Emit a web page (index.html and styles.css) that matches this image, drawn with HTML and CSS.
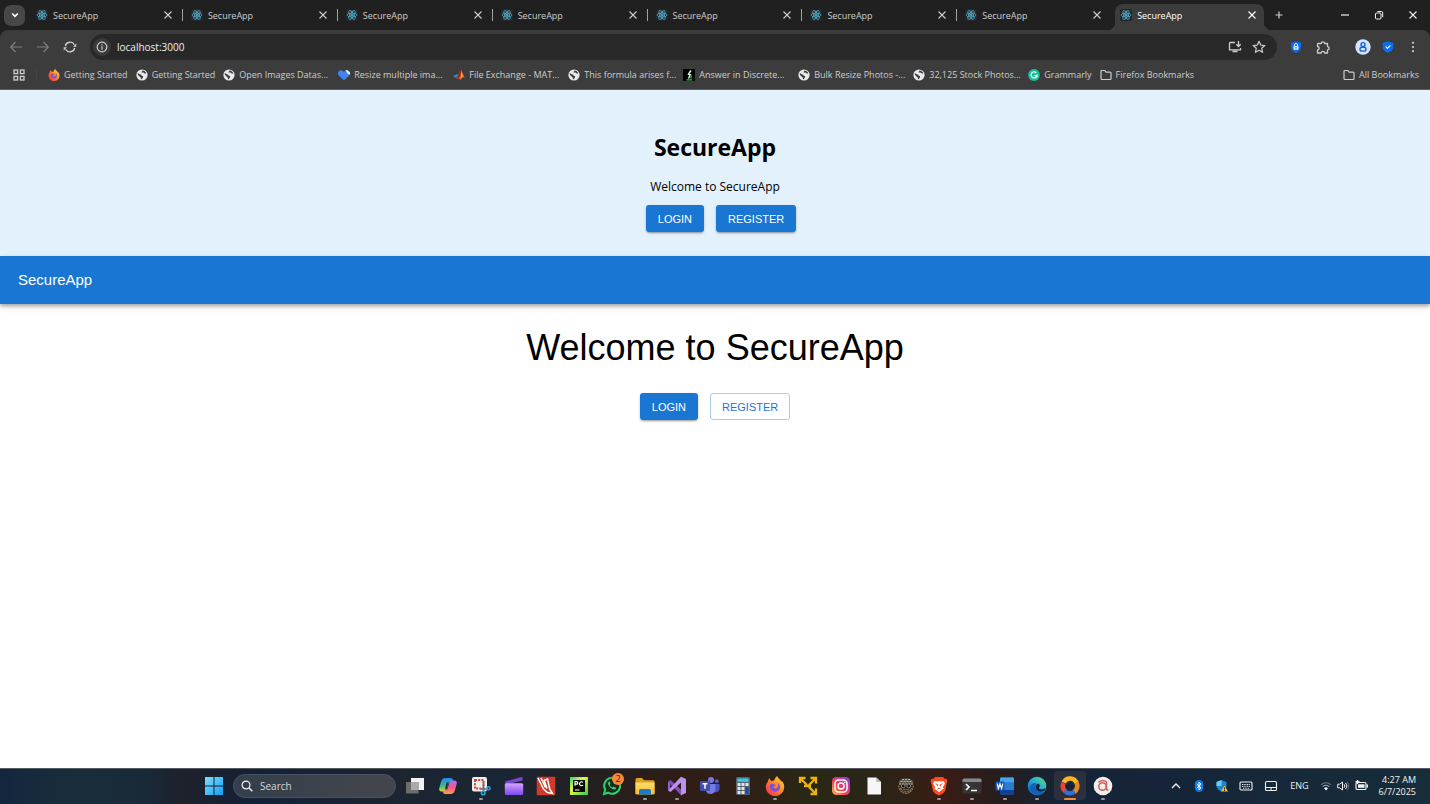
FILE: index.html
```html
<!DOCTYPE html>
<html lang="en">
<head>
<meta charset="utf-8">
<meta name="viewport" content="width=device-width, initial-scale=1">
<title>SecureApp</title>
<link rel="stylesheet" href="styles.css">
</head>
<body>
<svg class="sprite" aria-hidden="true">
  <defs>
    <linearGradient id="g-win" x1="0" y1="0" x2="1" y2="1"><stop offset="0" stop-color="#7fdcff"/><stop offset="1" stop-color="#12a0f2"/></linearGradient>
    <linearGradient id="g-fox" x1="1" y1="0" x2="0" y2="1"><stop offset="0" stop-color="#ffe14a"/><stop offset=".45" stop-color="#ff8a22"/><stop offset="1" stop-color="#f5205a"/></linearGradient>
    <linearGradient id="g-clip" x1="0" y1="0" x2="0" y2="1"><stop offset="0" stop-color="#d9a6ff"/><stop offset=".5" stop-color="#a873f7"/><stop offset="1" stop-color="#7a4cf0"/></linearGradient>
    <linearGradient id="g-cop1" x1="0" y1="0" x2="0" y2="1"><stop offset="0" stop-color="#1d8df0"/><stop offset=".6" stop-color="#37bf8b"/><stop offset="1" stop-color="#f1cf2b"/></linearGradient>
    <linearGradient id="g-cop2" x1="0" y1="0" x2="0" y2="1"><stop offset="0" stop-color="#b06cf5"/><stop offset=".5" stop-color="#f0568c"/><stop offset="1" stop-color="#ffa04c"/></linearGradient>
    <linearGradient id="g-insta" x1="0" y1="1" x2="1" y2="0"><stop offset="0" stop-color="#ffc34a"/><stop offset=".4" stop-color="#f4404f"/><stop offset=".7" stop-color="#c835a5"/><stop offset="1" stop-color="#6a4be0"/></linearGradient>
    <linearGradient id="g-edge" x1="0" y1="1" x2="1" y2="0"><stop offset="0" stop-color="#0b58b4"/><stop offset=".5" stop-color="#23a7dc"/><stop offset="1" stop-color="#62e06b"/></linearGradient>
    <linearGradient id="g-folder" x1="0" y1="0" x2="0" y2="1"><stop offset="0" stop-color="#ffdf70"/><stop offset="1" stop-color="#f9bb2c"/></linearGradient>
    <linearGradient id="g-pc" x1="0" y1="0" x2="1" y2="1"><stop offset="0" stop-color="#24d789"/><stop offset=".4" stop-color="#e8f73c"/><stop offset="1" stop-color="#35c45a"/></linearGradient>
  </defs>
  <symbol id="react" viewBox="0 0 24 24"><rect width="24" height="24" rx="3" fill="#23272c"/><g fill="none" stroke="#4fa9c2" stroke-width="1.7"><ellipse cx="12" cy="12" rx="10" ry="4"/><ellipse cx="12" cy="12" rx="10" ry="4" transform="rotate(60 12 12)"/><ellipse cx="12" cy="12" rx="10" ry="4" transform="rotate(120 12 12)"/></g><circle cx="12" cy="12" r="2.2" fill="#58bcd6"/></symbol>
  <symbol id="close" viewBox="0 0 10 10"><path d="M1.500 1.500l7 7M8.500 1.500l-7 7" fill="none" stroke="currentColor" stroke-width="1.1"/></symbol>
  <symbol id="chevron-down" viewBox="0 0 10 10"><path d="M2.200 3.500L5 6.300l2.800-2.800" fill="none" stroke="currentColor" stroke-width="1.6"/></symbol>
  <symbol id="plus" viewBox="0 0 10 10"><path d="M5 1.500v7M1.500 5h7" stroke="currentColor" stroke-width="1.2"/></symbol>
  <symbol id="minus" viewBox="0 0 10 10"><path d="M1 5h8" stroke="currentColor" stroke-width="1.200"/></symbol>
  <symbol id="restore" viewBox="0 0 10 10"><rect x="1.500" y="3" width="5.500" height="6" rx="1" fill="none" stroke="currentColor"/><path d="M3.500 1.500h4a1.200 1.200 0 0 1 1.200 1.200v4.500" fill="none" stroke="currentColor"/></symbol>
  <symbol id="back" viewBox="0 0 14 14"><path d="M13 7H2M6.500 2L1.700 7l4.800 5" fill="none" stroke="currentColor" stroke-width="1.200"/></symbol>
  <symbol id="forward" viewBox="0 0 14 14"><path d="M1 7h11M7.500 2l4.800 5-4.800 5" fill="none" stroke="currentColor" stroke-width="1.200"/></symbol>
  <symbol id="reload" viewBox="0 0 14 14"><path d="M2.300 6a4.900 4.900 0 0 1 9.100-1.200M11.700 8a4.900 4.900 0 0 1-9.100 1.200" fill="none" stroke="currentColor" stroke-width="1.300"/><path d="M13.300 3.500v3.300H10zM.7 10.500V7.200H4z" fill="currentColor"/></symbol>
  <symbol id="info" viewBox="0 0 12 12"><circle cx="6" cy="6" r="4.800" fill="none" stroke="currentColor" stroke-width="1.200"/><path d="M6 5.300v3.400M6 3.200v1.200" stroke="currentColor" stroke-width="1.200"/></symbol>
  <symbol id="install" viewBox="0 0 14 14"><path d="M7 2.500H2.200a.7.700 0 0 0-.7.700v6.600h11V8M4.500 11.500h5M10.500 1v5M8.300 4.300l2.200 2.200 2.200-2.200" fill="none" stroke="currentColor" stroke-width="1.300"/></symbol>
  <symbol id="star" viewBox="0 0 14 14"><path d="M7 1.300l1.700 3.800 4.100.4-3.100 2.700.9 4.100L7 10.200l-3.600 2.100.9-4.100-3.100-2.700 4.100-.4z" fill="none" stroke="currentColor" stroke-width="1.200" stroke-linejoin="round"/></symbol>
  <symbol id="shield-lock" viewBox="0 0 12 12"><path d="M6 .3l5 1.500v4.500c0 2.500-2 4.500-5 5.500-3-1-5-3-5-5.500V1.800z" fill="#0b6cf5"/><rect x="3.500" y="5" width="5" height="3.700" rx=".6" fill="#dbeaff"/><path d="M4.500 5V4a1.500 1.500 0 0 1 3 0v1" fill="none" stroke="#dbeaff"/><circle cx="6" cy="6.800" r=".7" fill="#0b6cf5"/></symbol>
  <symbol id="puzzle" viewBox="0 0 14 14"><path d="M2.300 3.500h2.900a1.700 1.700 0 1 1 3.400 0h2.900v3.100a1.600 1.600 0 1 1 0 3.200v3.200H8.600a1.700 1.700 0 0 0-3.400 0H1.500V9.900a1.700 1.700 0 0 0 0-3.400V4.300a.8.800 0 0 1 .8-.8z" fill="none" stroke="currentColor" stroke-width="1.300" stroke-linejoin="round"/></symbol>
  <symbol id="profile" viewBox="0 0 16 16"><circle cx="8" cy="8" r="7.700" fill="#d2e4ff"/><circle cx="8" cy="5.600" r="2" fill="none" stroke="#1763cf" stroke-width="1.400"/><rect x="5" y="8.300" width="6" height="3.800" rx="1.900" fill="none" stroke="#1763cf" stroke-width="1.400"/></symbol>
  <symbol id="shield-check" viewBox="0 0 12 12"><path d="M6 .3l5.300 1.600v4.300c0 2.700-2.200 4.500-5.300 5.500C2.900 10.700.7 8.900.7 6.200V1.900z" fill="#0b6cf5"/><path d="M3.700 5.700l1.700 1.700 3-3" fill="none" stroke="#fff" stroke-width="1.200"/></symbol>
  <symbol id="dots" viewBox="0 0 12 12"><g fill="currentColor"><circle cx="6" cy="1.800" r="1.100"/><circle cx="6" cy="6" r="1.100"/><circle cx="6" cy="10.200" r="1.100"/></g></symbol>
  <symbol id="apps" viewBox="0 0 12 12"><g fill="none" stroke="currentColor" stroke-width="1.300"><rect x="1" y="1" width="3.600" height="3.600"/><rect x="7.400" y="1" width="3.600" height="3.600"/><rect x="1" y="7.400" width="3.600" height="3.600"/><rect x="7.400" y="7.400" width="3.600" height="3.600"/></g></symbol>
  <symbol id="globe" viewBox="0 0 12 12"><circle cx="6" cy="6" r="5.600" fill="#e8eaed"/><path d="M1.500 4.200c1.500-.3 2 1.300 3.500 1.300.7.600.3 1.300 1.500 1.500 1 .3.800 1.500 0 2l-1 1.500c-.8-.5-.4-1.600-1-2.300C3.600 7.300 2 6.800 1.500 4.200zM6.500 1.500c-.2 1.200-1 1-1 1.800.7.700 1.600-.2 2.300.5.500 1 1.600.7 2.500.6-.3-1.500-2-2.800-3.800-2.900z" fill="#3c3c3c"/></symbol>
  <symbol id="firefox" viewBox="0 0 20 20"><path d="M18.800 8.300c-.5-1.500-1.600-3-2.600-3.700.2.500.4 1.200.5 1.700C15.200 3 13 2.700 12.300 0c-2 1.200-2.800 3.200-2.900 4.300-1 .1-1.800.4-2.600.9C5.700 4.700 5 3.600 4.700 2.200 3.300 3.300 2.900 4.700 2.900 5.800 1.600 7.200.8 9 .8 11a9.200 9.200 0 0 0 18.400 0c0-1-.1-1.900-.4-2.700z" fill="url(#g-fox)"/><path d="M5.300 8.300c1-.8 2.400-.7 3.400 0 .8.400 1.700.3 2.100.9-.7.900-2.300.6-2.500 1.900-.1 1.800 2.400 2.200 3.700 1 1.300-1.200 1.500-3.300.6-5.100 2.500 1.300 3.200 4.300 1.700 6.600-1.900 2.700-6.100 2.700-8.200.2-1.500-1.700-1.500-3.900-.8-5.500z" fill="#7650e2"/></symbol>
  <symbol id="hearts" viewBox="0 0 12 12"><path d="M6 11.500L1 6.700A3 3 0 0 1 5.300 2.200l.7.700.7-.7A3 3 0 0 1 11 6.700z" fill="#3e83f5"/><path d="M7.500 1.300h2.100L12 3.500v2L9.800 5z" fill="#e9f1ff"/></symbol>
  <symbol id="matlab" viewBox="0 0 12 12"><path d="M0 7l4-2 2 2-3 2z" fill="#2f86c9"/><path d="M3 9C5.500 8.500 6 1 8 1c1.500 1 2.500 6 4 8-2-1.500-3-.5-4.500 2C6.500 10 5.500 9.500 4.500 10z" fill="#e2622b"/><path d="M8 1c0 3-.5 6.500-2.500 8.700L3 9C5.500 8 6 1 8 1z" fill="#8d2b1e"/><path d="M8.200 2.400c.9 1.800 1.300 4 1.700 5.500-.9.200-1.200.8-1.700 1.600z" fill="#f8b33e"/></symbol>
  <symbol id="discrete" viewBox="0 0 12 12"><rect width="12" height="12" fill="#000"/><path d="M8 1.500L5.500 5.200l1.700.6L5.500 9.500" fill="none" stroke="#e9f7e9" stroke-width="1.500"/><path d="M3.500 10.800h5.500M8 5.500v4" stroke="#1fc93c" stroke-width="1.300"/></symbol>
  <symbol id="grammarly" viewBox="0 0 12 12"><circle cx="6" cy="6" r="5.900" fill="#15c39a"/><path d="M8.300 3.900A3 3 0 1 0 9 6.600H6.500M9 5.600v2.800" fill="none" stroke="#fff" stroke-width="1.200"/></symbol>
  <symbol id="folder" viewBox="0 0 12 12"><path d="M1 2.500a1 1 0 0 1 1-1h2.800l1.400 1.600H10a1 1 0 0 1 1 1v5.400a1 1 0 0 1-1 1H2a1 1 0 0 1-1-1z" fill="none" stroke="currentColor" stroke-width="1.200"/></symbol>

  <symbol id="windows" viewBox="0 0 20 20"><path d="M1 1h8.500v8.500H1zM10.500 1H19v8.500h-8.500zM1 10.500h8.500V19H1zM10.500 10.500H19V19h-8.500z" fill="url(#g-win)"/></symbol>
  <symbol id="search" viewBox="0 0 12 12"><circle cx="5" cy="5" r="3.900" fill="none" stroke="currentColor" stroke-width="1.200"/><path d="M7.800 7.800l3.500 3.500" stroke="currentColor" stroke-width="1.400"/></symbol>
  <symbol id="taskview" viewBox="0 0 20 20"><path d="M6 2h13v12H6z" fill="#f2f2f2"/><path d="M1 6h12.500v11.500H1z" fill="#6d6d6d"/><path d="M6 6h7.500v8H6z" fill="#aaa"/></symbol>
  <symbol id="copilot" viewBox="0 0 20 20"><path d="M7.500 2h5.300c1 0 1.700.6 2 1.600l.5 1.900h-2.500c-1.200 0-1.900.7-2.300 1.900l-1.800 6c-.4 1.400-1.200 2.100-2.500 2.100H3.700C1.700 15.500.7 14 1.300 12l2-7C4 3 5.300 2 7.500 2z" fill="url(#g-cop1)"/><path d="M12.500 18H7.200c-1 0-1.700-.6-2-1.600l-.4-1.900h2.500c1.200 0 1.900-.7 2.300-1.900l1.800-6c.4-1.400 1.200-2.100 2.500-2.100h2.400c2 0 3 1.500 2.400 3.500l-2 7c-.7 2-2 3-4.200 3z" fill="url(#g-cop2)"/><path d="M8.500 6.500h2l-2 7H7z" fill="#1c2530"/></symbol>
  <symbol id="snip" viewBox="0 0 20 20"><rect x="1" y="1" width="15" height="14.500" rx="2" fill="#eee"/><rect x="4" y="4" width="8.500" height="8.500" fill="none" stroke="#d8422e" stroke-width="2" stroke-dasharray="2 1.200"/><path d="M12.500 6v9M9.500 13h7.500" stroke="#66717b" stroke-width="1.700"/><circle cx="12.200" cy="17" r="1.800" fill="none" stroke="#2aa5e6" stroke-width="1.500"/><circle cx="17.500" cy="12.300" r="1.600" fill="none" stroke="#2aa5e6" stroke-width="1.500"/></symbol>
  <symbol id="clipchamp" viewBox="0 0 20 20"><path d="M1 5.500L17.300 1a1 1 0 0 1 1.300.9v2.500L1.500 8.500z" fill="#7b45cf"/><rect x=".8" y="7.200" width="18.400" height="11.800" rx="1.500" fill="url(#g-clip)"/></symbol>
  <symbol id="wacom" viewBox="0 0 20 20"><rect x=".7" y=".7" width="18.600" height="18.600" rx="1" fill="#cf3a2b"/><path d="M2 2l5.500 11 4 3.500 5 1-2.700-4.300L11.500 3l-3.300 1.500 2.800 8M5 2l4.500 9.500" fill="none" stroke="#fff" stroke-width="1.500"/></symbol>
  <symbol id="pycharm" viewBox="0 0 20 20"><path d="M1 1h18v18H1z" fill="url(#g-pc)"/><path d="M4 4h12v12H4z" fill="#050805"/><path d="M6 9.800V5.700h1.500a1.200 1.200 0 0 1 0 2.500H6M14 6.400a2 2 0 1 0 0 2.700M6 14h4.500" fill="none" stroke="#fff" stroke-width="1.200"/></symbol>
  <symbol id="whatsapp" viewBox="0 0 20 20"><path d="M2 18l1.200-4.300a8 8 0 1 1 3 3z" fill="#172b22" stroke="#2ad268" stroke-width="2"/><path d="M7 5.600c-1.500 1-1.300 3 .6 5.200 2 2.300 4.500 3.600 6.200 2.200l.3-1.300-2.500-1.300-1.100 1.200c-1.300-.5-2.300-1.500-2.900-2.700l.9-1.100-.8-2.200z" fill="#2ad268"/></symbol>
  <symbol id="explorer" viewBox="0 0 20 20"><path d="M.5 3.500A1.500 1.500 0 0 1 2 2h5l2.200 2.300H18A1.500 1.500 0 0 1 19.500 6v12H.5z" fill="#e4a01d"/><path d="M.5 6.500h19V17a1.500 1.500 0 0 1-1.500 1.500H2A1.500 1.500 0 0 1 .5 17z" fill="url(#g-folder)"/><path d="M4 18.500v-3.700A1.800 1.800 0 0 1 5.800 13h8.400a1.800 1.800 0 0 1 1.800 1.800v3.700z" fill="#187ecb"/></symbol>
  <symbol id="vs" viewBox="0 0 20 20"><path d="M1 5.500L3.500 4l11 11 .5 4.500L1 15z" fill="none"/><path d="M1 5.500L3.500 4 15 14.500v4.700h-1z" fill="#7f50bb"/><path d="M14 .8l5 2.300v13.800l-5 2.300V6.500L3.500 16 1 14.500z" fill="#bd91ee"/><path d="M1 5.500v9L5.700 10z" fill="#9463d2"/><path d="M3 8v4l2-2z" fill="#231c1f"/></symbol>
  <symbol id="teams" viewBox="0 0 20 20"><circle cx="11" cy="4" r="3" fill="#747be5"/><circle cx="16.800" cy="5.300" r="2" fill="#545bc7"/><path d="M13 8h6.500v5a3.500 3.500 0 0 1-5 3z" fill="#4950b5"/><path d="M6 8h9.500v6a5 5 0 0 1-9.500 1z" fill="#737be5"/><rect y="5" width="10" height="10" rx="1" fill="#424dae"/><path d="M2.500 7.700h5M5 7.700v5" stroke="#fff" stroke-width="1.500"/></symbol>
  <symbol id="calc" viewBox="0 0 20 20"><rect x="3" y="1" width="14" height="18" rx="1.500" fill="#59636f"/><path d="M4.500 2.500h11v3.300h-11z" fill="#42c6ef"/><path d="M4.500 7h3v3h-3zM8.500 7h3v3h-3zM12.500 7h3v3h-3zM4.500 11h3v3h-3zM8.500 11h3v3h-3zM4.500 15h3v3h-3zM8.500 15h3v3h-3z" fill="#e0e5e9"/><path d="M12.500 11h3v7h-3z" fill="#184d93"/></symbol>
  <symbol id="arrows" viewBox="0 0 20 20"><g fill="none" stroke="#efb20d" stroke-width="2.300"><path d="M2 7V2h5.500M2.500 2.500L9 9M12.500 2H18v5.500M17.500 2.500L11 9M18 12.500V18h-5.500M17.500 17.500L11 11M6 10h7"/></g></symbol>
  <symbol id="instagram" viewBox="0 0 20 20"><rect x="1" y="1" width="18" height="18" rx="4.500" fill="url(#g-insta)"/><rect x="4" y="4" width="12" height="12" rx="3.500" fill="none" stroke="#fff" stroke-width="1.500"/><circle cx="10" cy="10" r="3" fill="none" stroke="#fff" stroke-width="1.500"/><circle cx="13.700" cy="6.300" r=".9" fill="#fff"/></symbol>
  <symbol id="document" viewBox="0 0 20 20"><path d="M3.500 1.500h8.700L17 6v12.500H3.500z" fill="#f6f6f6"/><path d="M12.200 1.500V6H17z" fill="#bbb"/></symbol>
  <symbol id="emblem" viewBox="0 0 20 20"><path d="M2.500 6c2-5 13-5 15 0l-1 2.500h-13z" fill="#57534b"/><path d="M4.500 5.500h11M3 8h14M6 3.500h8" stroke="#bbb6aa" stroke-width="1" stroke-dasharray="2 1"/><circle cx="7.200" cy="10" r="1.900" fill="#141414" stroke="#8d877a"/><circle cx="12.800" cy="10" r="1.900" fill="#141414" stroke="#8d877a"/><path d="M2.500 9.500c.5 4 3 7.500 7.500 8 4.500-.5 7-4 7.500-8M4.500 12c1 2.500 2.500 3.500 5.500 3.800 3-.3 4.500-1.300 5.500-3.800M7.500 13.500h5" fill="none" stroke="#897852" stroke-width="1.200" stroke-dasharray="2 .7"/></symbol>
  <symbol id="brave" viewBox="0 0 20 20"><path d="M6 1h8l1.800 2 1.700-.2 1 2.700-.8 1.500-1.500 7.500c-.5 2-3.500 4-6.200 5-2.700-1-5.700-3-6.200-5L2.300 7 1.500 5.500l1-2.700L4.200 3z" fill="#fb4b23"/><path d="M5.500 5l2.700.5L10 5l1.800.5 2.700-.5L16 7.500l-2 3.200.5 2L10 16l-4.500-3.300.5-2-2-3.200z" fill="#fff"/><path d="M6.500 7.800l2.300.9-.3 1.600M13.500 7.800l-2.300.9.300 1.600M8.300 13l1.700-.9 1.700.9" fill="none" stroke="#fb4b23" stroke-width="1"/></symbol>
  <symbol id="terminal" viewBox="0 0 20 20"><rect x=".5" y="2.500" width="19" height="15" rx="1.500" fill="#353535"/><path d="M.5 6V4A1.500 1.500 0 0 1 2 2.500h16A1.500 1.500 0 0 1 19.500 4v2z" fill="#888"/><path d="M4 8l3 3-3 3M9 14.500h6" fill="none" stroke="#fff" stroke-width="1.700"/></symbol>
  <symbol id="word" viewBox="0 0 20 20"><rect x="5" y="1.500" width="14" height="17" rx="1.200" fill="#2b7cd3"/><path d="M5 2.700A1.200 1.200 0 0 1 6.200 1.500h11.600A1.200 1.200 0 0 1 19 2.700v3.600H5z" fill="#43a5ee"/><path d="M5 14h14v3.300a1.200 1.200 0 0 1-1.200 1.200H6.200A1.200 1.200 0 0 1 5 17.300z" fill="#123f92"/><rect x=".5" y="5.500" width="9" height="9" rx="1" fill="#1857b8"/><path d="M2.200 7.700l1.200 4.700L5 8l1.600 4.400 1.200-4.700" fill="none" stroke="#fff" stroke-width="1.200"/></symbol>
  <symbol id="edge" viewBox="0 0 20 20"><circle cx="10" cy="10" r="9.300" fill="url(#g-edge)"/><path d="M9.500 8c-2 2.500-.8 6.500 3 7.500 2 .6 4.200.3 5.800-.7-2.300 4.500-8 5.700-12 3-3.700-2.500-4.500-7.500-1-10C7 6.500 9 7 9.500 8z" fill="#1160b7"/><path d="M9.700 8.200c1-1 3-.3 3.200 1.300.1 1-.9 1.700-.9 2.400 0 1.300 2.700 1.800 5 .8l1.300-.8c-.1 1-.2 2-.5 2.700-2 1.500-5 1.500-7 .2-2.300-1.500-2.500-4.600-1.100-6.600z" fill="#122539"/></symbol>
  <symbol id="ring" viewBox="0 0 20 20"><g fill="none" stroke-width="4.500"><path d="M3.600 6.500A7.200 7.200 0 0 1 16.700 7" stroke="#ffb51d"/><path d="M16.300 6.300A7.200 7.200 0 0 1 14 16" stroke="#e3872b"/><path d="M14.500 15.600A7.200 7.200 0 0 1 4.800 15" stroke="#3170db"/><path d="M5 15.200A7.200 7.200 0 0 1 3.500 7" stroke="#e7463a"/></g><path d="M10 4.500l4.500 5-2 5h-5l-2-5z" fill="#182235"/></symbol>
  <symbol id="avast" viewBox="0 0 20 20"><circle cx="10" cy="10" r="9.300" fill="#eee"/><circle cx="9.500" cy="10.500" r="3.700" fill="none" stroke="#cf625c" stroke-width="1.500"/><path d="M5.500 6.500a5.500 5.500 0 0 1 8-.5v6.500c0 1.500.8 2 1.800 1.200" fill="none" stroke="#cf625c" stroke-width="1.500"/></symbol>

  <symbol id="caret-up" viewBox="0 0 12 12"><path d="M2 8l4-4 4 4" fill="none" stroke="currentColor" stroke-width="1.300"/></symbol>
  <symbol id="bluetooth" viewBox="0 0 12 12"><rect x="1.800" width="8.400" height="12" rx="4.200" fill="#0a7cf0"/><path d="M3.800 4l4.300 3.800L6 9.800V2.200l2.100 2L3.800 8" fill="none" stroke="#fff"/></symbol>
  <symbol id="defender" viewBox="0 0 12 12"><path d="M5.500 0L10.500 2v4c0 2.700-2 4.500-5 5.500C2.500 10.500.5 8.700.5 6V2z" fill="#1b86d0"/><path d="M5.500 0v6h-5V2z" fill="#6dcaf5"/><path d="M8.500 5.500l3.500 6H5z" fill="#f9bd21"/><path d="M8.500 7.500v2M8.500 10v1" stroke="#282828"/></symbol>
  <symbol id="keyboard" viewBox="0 0 14 14"><rect x="1" y="3" width="12" height="8" rx="1" fill="none" stroke="currentColor" stroke-width="1.100"/><path d="M3 5.500h8M3 7.300h8M4 9.200h6" stroke="currentColor" stroke-dasharray="1 .7"/></symbol>
  <symbol id="touchpad" viewBox="0 0 14 14"><rect x="1.500" y="2.500" width="11" height="9" rx="1.300" fill="none" stroke="currentColor" stroke-width="1.100"/><path d="M1.500 8.500h11M7 8.500v3" stroke="currentColor" stroke-width="1.100"/></symbol>
  <symbol id="wifi" viewBox="0 0 12 12"><path d="M1 4.800a7 7 0 0 1 10 0" fill="none" stroke="#667684" stroke-width="1.100"/><path d="M2.700 6.700a4.600 4.600 0 0 1 6.600 0" fill="none" stroke="#a5afb8" stroke-width="1.100"/><path d="M4 8.200a2.800 2.800 0 0 1 4 0L6 10.500z" fill="currentColor"/></symbol>
  <symbol id="sound" viewBox="0 0 12 12"><path d="M.7 4.200h2L5.500 2v8L2.700 7.800h-2z" fill="none" stroke="currentColor"/><path d="M7 4.200c1 1 1 2.600 0 3.600M8.500 2.900c1.700 1.700 1.700 4.500 0 6.200" fill="none" stroke="currentColor"/><path d="M10 1.800c2 2.400 2 6 0 8.400" fill="none" stroke="#667684"/></symbol>
  <symbol id="battery" viewBox="0 0 14 14"><rect x="2" y="3.500" width="10" height="7" rx="1.300" fill="none" stroke="currentColor" stroke-width="1.200"/><path d="M4 5.300h6.500v3.500H4z" fill="currentColor"/><path d="M13.300 5.500v3" stroke="currentColor" stroke-width="1.300"/><path d="M3.500 1v4M1.500 2.700h4" stroke="currentColor" stroke-width="1.500"/></symbol>
</svg>

<header class="browser">
  <div class="tabstrip">
    <button class="tab-search" aria-label="Search tabs"><svg class="i10"><use href="#chevron-down"/></svg></button>
    <div class="tabs">
      <div class="tab"><button class="tab-name"><svg class="i12"><use href="#react"/></svg>SecureApp</button><button class="tab-close" aria-label="Close tab"><svg class="i10"><use href="#close"/></svg></button></div>
      <div class="tab"><button class="tab-name"><svg class="i12"><use href="#react"/></svg>SecureApp</button><button class="tab-close" aria-label="Close tab"><svg class="i10"><use href="#close"/></svg></button></div>
      <div class="tab"><button class="tab-name"><svg class="i12"><use href="#react"/></svg>SecureApp</button><button class="tab-close" aria-label="Close tab"><svg class="i10"><use href="#close"/></svg></button></div>
      <div class="tab"><button class="tab-name"><svg class="i12"><use href="#react"/></svg>SecureApp</button><button class="tab-close" aria-label="Close tab"><svg class="i10"><use href="#close"/></svg></button></div>
      <div class="tab"><button class="tab-name"><svg class="i12"><use href="#react"/></svg>SecureApp</button><button class="tab-close" aria-label="Close tab"><svg class="i10"><use href="#close"/></svg></button></div>
      <div class="tab"><button class="tab-name"><svg class="i12"><use href="#react"/></svg>SecureApp</button><button class="tab-close" aria-label="Close tab"><svg class="i10"><use href="#close"/></svg></button></div>
      <div class="tab tab-last"><button class="tab-name"><svg class="i12"><use href="#react"/></svg>SecureApp</button><button class="tab-close" aria-label="Close tab"><svg class="i10"><use href="#close"/></svg></button></div>
      <div class="tab tab-active"><button class="tab-name"><svg class="i12"><use href="#react"/></svg>SecureApp</button><button class="tab-close" aria-label="Close tab"><svg class="i10"><use href="#close"/></svg></button></div>
    </div>
    <button class="icon-button" aria-label="New tab"><svg class="i10"><use href="#plus"/></svg></button>
    <div class="window-controls">
      <button class="icon-button" aria-label="Minimize"><svg class="i10"><use href="#minus"/></svg></button>
      <button class="icon-button" aria-label="Restore"><svg class="i10"><use href="#restore"/></svg></button>
      <button class="icon-button" aria-label="Close window"><svg class="i10"><use href="#close"/></svg></button>
    </div>
  </div>

  <div class="chrome">
    <div class="toolbar">
      <div class="nav">
        <button class="icon-button dim" aria-label="Back"><svg class="i14"><use href="#back"/></svg></button>
        <button class="icon-button dim" aria-label="Forward"><svg class="i14"><use href="#forward"/></svg></button>
        <button class="icon-button" aria-label="Reload"><svg class="i14"><use href="#reload"/></svg></button>
      </div>
      <div class="omnibox">
        <button class="site-info" aria-label="Site information"><svg class="i12"><use href="#info"/></svg></button>
        <input class="url" type="text" aria-label="Address" value="localhost:3000">
        <button class="icon-button" aria-label="Install app"><svg class="i14"><use href="#install"/></svg></button>
        <button class="icon-button" aria-label="Bookmark this page"><svg class="i14"><use href="#star"/></svg></button>
      </div>
      <div class="extensions">
        <button class="icon-button" aria-label="Privacy"><svg class="i12"><use href="#shield-lock"/></svg></button>
        <button class="icon-button" aria-label="Extensions"><svg class="i14"><use href="#puzzle"/></svg></button>
      </div>
      <div class="account">
        <button class="icon-button" aria-label="Profile"><svg class="i16"><use href="#profile"/></svg></button>
        <button class="icon-button" aria-label="Protection"><svg class="i12"><use href="#shield-check"/></svg></button>
        <button class="icon-button" aria-label="Menu"><svg class="i12"><use href="#dots"/></svg></button>
      </div>
    </div>
    <nav class="bookmarks" aria-label="Bookmarks">
      <button class="apps" aria-label="Apps"><svg class="i12"><use href="#apps"/></svg></button>
      <a class="bookmark" href="#"><svg class="i12"><use href="#firefox"/></svg>Getting Started</a>
      <a class="bookmark" href="#"><svg class="i12"><use href="#globe"/></svg>Getting Started</a>
      <a class="bookmark bookmark-wide" href="#"><svg class="i12"><use href="#globe"/></svg>Open Images Datas...</a>
      <a class="bookmark bookmark-wide" href="#"><svg class="i12"><use href="#hearts"/></svg>Resize multiple ima...</a>
      <a class="bookmark bookmark-wide" href="#"><svg class="i12"><use href="#matlab"/></svg>File Exchange - MAT...</a>
      <a class="bookmark bookmark-wide" href="#"><svg class="i12"><use href="#globe"/></svg>This formula arises f...</a>
      <a class="bookmark bookmark-wide" href="#"><svg class="i12"><use href="#discrete"/></svg>Answer in Discrete...</a>
      <a class="bookmark bookmark-wide" href="#"><svg class="i12"><use href="#globe"/></svg>Bulk Resize Photos -...</a>
      <a class="bookmark bookmark-wide" href="#"><svg class="i12"><use href="#globe"/></svg>32,125 Stock Photos...</a>
      <a class="bookmark" href="#"><svg class="i12"><use href="#grammarly"/></svg>Grammarly</a>
      <a class="bookmark" href="#"><svg class="i12"><use href="#folder"/></svg>Firefox Bookmarks</a>
      <a class="bookmark bookmark-end" href="#"><svg class="i12"><use href="#folder"/></svg>All Bookmarks</a>
    </nav>
  </div>
</header>

<div class="page">
  <section class="hero">
    <h1 class="hero-title">SecureApp</h1>
    <p class="hero-text">Welcome to SecureApp</p>
    <div class="hero-actions">
      <button class="btn btn-contained">LOGIN</button>
      <button class="btn btn-contained">REGISTER</button>
    </div>
  </section>
  <div class="appbar">SecureApp</div>
  <main class="main">
    <h2 class="main-title">Welcome to SecureApp</h2>
    <div class="main-actions">
      <button class="btn btn-contained">LOGIN</button>
      <button class="btn btn-outlined">REGISTER</button>
    </div>
  </main>
</div>

<footer class="taskbar">
  <button class="start" aria-label="Start"><svg class="i20"><use href="#windows"/></svg></button>
  <label class="search"><svg class="i12"><use href="#search"/></svg><input class="search-input" type="text" placeholder="Search" aria-label="Search"></label>
  <div class="pinned">
    <button class="pin" aria-label="Task view"><svg class="i20"><use href="#taskview"/></svg></button>
    <button class="pin" aria-label="Copilot"><svg class="i20"><use href="#copilot"/></svg></button>
    <button class="pin running" aria-label="Snipping Tool"><svg class="i20"><use href="#snip"/></svg></button>
    <button class="pin" aria-label="Clipchamp"><svg class="i20"><use href="#clipchamp"/></svg></button>
    <button class="pin" aria-label="Drawing"><svg class="i20"><use href="#wacom"/></svg></button>
    <button class="pin" aria-label="PyCharm"><svg class="i20"><use href="#pycharm"/></svg></button>
    <button class="pin" aria-label="WhatsApp"><svg class="i20"><use href="#whatsapp"/></svg><span class="badge">2</span></button>
    <button class="pin running" aria-label="File Explorer"><svg class="i20"><use href="#explorer"/></svg></button>
    <button class="pin running" aria-label="Visual Studio"><svg class="i20"><use href="#vs"/></svg></button>
    <button class="pin" aria-label="Teams"><svg class="i20"><use href="#teams"/></svg></button>
    <button class="pin" aria-label="Calculator"><svg class="i20"><use href="#calc"/></svg></button>
    <button class="pin running" aria-label="Firefox"><svg class="i20"><use href="#firefox"/></svg></button>
    <button class="pin" aria-label="Virtual machines"><svg class="i20"><use href="#arrows"/></svg></button>
    <button class="pin" aria-label="Instagram"><svg class="i20"><use href="#instagram"/></svg></button>
    <button class="pin" aria-label="Document"><svg class="i20"><use href="#document"/></svg></button>
    <button class="pin" aria-label="Emblem"><svg class="i20"><use href="#emblem"/></svg></button>
    <button class="pin running" aria-label="Brave"><svg class="i20"><use href="#brave"/></svg></button>
    <button class="pin running" aria-label="Terminal"><svg class="i20"><use href="#terminal"/></svg></button>
    <button class="pin running" aria-label="Word"><svg class="i20"><use href="#word"/></svg></button>
    <button class="pin running" aria-label="Edge"><svg class="i20"><use href="#edge"/></svg></button>
    <button class="pin running current" aria-label="Secure Browser"><svg class="i20"><use href="#ring"/></svg></button>
    <button class="pin running" aria-label="Antivirus"><svg class="i20"><use href="#avast"/></svg></button>
  </div>
  <div class="tray">
    <svg class="i12"><use href="#caret-up"/></svg>
    <svg class="i12"><use href="#bluetooth"/></svg>
    <svg class="i12"><use href="#defender"/></svg>
    <svg class="i14"><use href="#keyboard"/></svg>
    <svg class="i14"><use href="#touchpad"/></svg>
    <span class="lang">ENG</span>
    <div class="status"><svg class="i12"><use href="#wifi"/></svg><svg class="i12"><use href="#sound"/></svg><svg class="i14"><use href="#battery"/></svg></div>
    <div class="clock"><span>4:27 AM</span><span>6/7/2025</span></div>
  </div>
</footer>
</body>
</html>
```

FILE: styles.css
```css
* { box-sizing: border-box; }

body {
  display: flex;
  flex-direction: column;
  min-height: 100vh;
  margin: 0;
  background: #fff;
  color: #000;
  font-family: "Open Sans", "Noto Sans", sans-serif;
  font-size: 9px;
}

button, input { font: inherit; color: inherit; }

button {
  display: flex;
  align-items: center;
  justify-content: center;
  padding: 0;
  border: 0;
  background: none;
}

input {
  min-width: 0;
  padding: 0;
  border: 0;
  background: none;
  outline: 0;
}

svg { flex: none; display: block; }
.sprite { position: absolute; width: 0; height: 0; }
.i10 { width: 10px; height: 10px; }
.i12 { width: 12px; height: 12px; }
.i14 { width: 14px; height: 14px; }
.i16 { width: 16px; height: 16px; }
.i20 { width: 20px; height: 20px; }

/* Browser window */
.browser { background: #202020; color: #cdcdcd; }

.tabstrip { display: flex; align-items: center; height: 30px; padding-left: 4px; }

.tab-search {
  width: 21px;
  height: 21px;
  margin-right: 3px;
  border-radius: 7px;
  background: #474747;
  color: #fff;
}

.tabs { display: flex; flex: 0 1 1239px; min-width: 0; align-self: stretch; }

.tab {
  display: flex;
  flex: 1 1 0;
  align-items: center;
  min-width: 0;
  padding: 0 8px;
  background: linear-gradient(#a3a3a3, #a3a3a3) right center / 1px 12px no-repeat;
}

.tab-name { flex: 1; justify-content: flex-start; gap: 5px; min-width: 0; overflow: hidden; }
.tab-close { width: 14px; height: 14px; }
.tab-last { background: none; }

.tab-active {
  position: relative;
  margin: 4px 3px 0;
  padding: 0 5px 4px;
  border-radius: 8px 8px 0 0;
  background: #3c3c3c;
  color: #fff;
}

.tab-active::before,
.tab-active::after {
  content: "";
  position: absolute;
  bottom: 0;
  width: 7px;
  height: 7px;
}
.tab-active::before { right: 100%; background: radial-gradient(circle at 0 0, #202020 7px, #3c3c3c 7px); }
.tab-active::after { left: 100%; background: radial-gradient(circle at 100% 0, #202020 7px, #3c3c3c 7px); }

.icon-button { width: 24px; height: 24px; }
.window-controls { display: flex; gap: 10px; margin-left: auto; padding-right: 5px; color: #f0f0f0; }

.chrome {
  border-radius: 8px 8px 0 0;
  background: #3c3c3c;
  border-bottom: 1px solid #5a5d62;
}

.toolbar { display: flex; align-items: center; padding: 4px 5px 0 4px; }
.nav { display: flex; gap: 3px; margin-right: 8px; }
.dim { color: #7e7e7e; }

.omnibox {
  display: flex;
  flex: 1;
  align-items: center;
  height: 26px;
  padding: 0 6px 0 3px;
  border-radius: 13px;
  background: #282828;
}

.site-info { width: 18px; height: 18px; border-radius: 9px; background: #3a3a3a; }
.url { flex: 1; margin-left: 6px; color: #f1f1f1; font-size: 10px; }
.extensions { display: flex; gap: 3px; margin-left: 7px; }
.account { display: flex; gap: 1px; margin-left: 16px; }

.bookmarks { display: flex; align-items: center; gap: 8px; height: 29px; padding: 0 11px 0 13px; }
.apps { margin-right: 3px; padding-right: 11px; border-right: 1px solid #444; }
.bookmark { display: flex; align-items: center; gap: 4px; color: inherit; text-decoration: none; white-space: nowrap; }
.bookmark-wide { width: 107px; }
.bookmark-end { margin-left: auto; }

/* Web page */
.page { display: flex; flex: 1; flex-direction: column; }

.hero {
  display: flex;
  flex-direction: column;
  align-items: center;
  padding: 40px 24px 24px;
  background: #e3f1fc;
}

.hero-title { margin: 0 0 15px; font-size: 23px; line-height: 34px; }
.hero-text { margin: 0 0 10px; font-size: 12px; line-height: 16px; }
.hero-actions { display: flex; }
.hero-actions .btn { margin-left: 12px; }

.btn {
  height: 27px;
  padding: 0 12px;
  border-radius: 3px;
  font-family: "Liberation Sans", Arial, sans-serif;
  font-size: 11px;
  line-height: 20px;
}

.btn-contained {
  background: #1976d2;
  color: #fff;
  box-shadow: 0 2px 2px -1px rgba(0, 0, 0, .25), 0 1px 3px rgba(0, 0, 0, .2);
}

.btn-outlined { padding: 0 11px; border: 1px solid #a9cbed; color: #1976d2; }

.appbar {
  padding: 12px 18px;
  background: #1976d2;
  color: #fff;
  font: 15px/24px "Liberation Sans", Arial, sans-serif;
  box-shadow: 0 2px 3px rgba(0, 0, 0, .25), 0 3px 7px rgba(0, 0, 0, .15);
}

.main {
  display: flex;
  flex-direction: column;
  align-items: center;
  padding: 23px 24px;
  font-family: "Liberation Sans", Arial, sans-serif;
}

.main-title { margin: 0 0 24px; font-size: 36px; font-weight: 400; line-height: 42px; }
.main-actions { display: flex; gap: 12px; }

/* Taskbar */
.taskbar {
  display: flex;
  align-items: center;
  height: 36px;
  padding: 0 14px 2px 202px;
  border-top: 1px solid #555b61;
  background: linear-gradient(90deg, #14263f 0%, #182d3a 5%, #182a38 10%, #1d212b 13%, #132138 18%, #1c2530 28%, #1a2534 35%, #241f20 41%, #2f1d15 48%, #2d2117 53%, #292815 57%, #2a2518 61%, #3a1c15 66%, #251d1d 70%, #162337 74%, #152438 80%, #172d3a 100%);
  color: #f2f2f2;
}

.start { width: 24px; height: 24px; margin-right: 7px; }

.search {
  display: flex;
  align-items: center;
  gap: 7px;
  width: 163px;
  height: 24px;
  padding: 0 7px;
  border: 1px solid #4a5361;
  border-radius: 12px;
  background: linear-gradient(90deg, #343e4c, #45464c);
}

.search-input { width: 100%; font-size: 10px; }
.search-input::placeholder { color: #d5d8db; opacity: 1; }

.pinned { display: flex; flex: 0 1 720px; min-width: 0; margin-left: 3px; align-self: stretch; }
.pin { position: relative; flex: 1 1 0; min-width: 0; }

.running::after {
  content: "";
  position: absolute;
  bottom: 2px;
  left: 50%;
  width: 4px;
  height: 2px;
  margin-left: -2px;
  border-radius: 1px;
  background: #999;
}

.current { margin: 2px 0; border-radius: 4px; background: #2b303c; }
.current::after { bottom: 0; width: 12px; margin-left: -6px; background: #f58b32; }

.badge {
  position: absolute;
  top: 4px;
  right: 4px;
  width: 12px;
  height: 12px;
  border-radius: 6px;
  background: #f78937;
  color: #222;
  font-size: 9px;
  line-height: 12px;
}

.tray { display: flex; align-items: center; gap: 11px; margin-left: auto; }
.lang { margin-left: 1px; }
.status { display: flex; align-items: center; gap: 5px; }
.clock { display: flex; flex-direction: column; align-items: flex-end; line-height: 12px; }
```
